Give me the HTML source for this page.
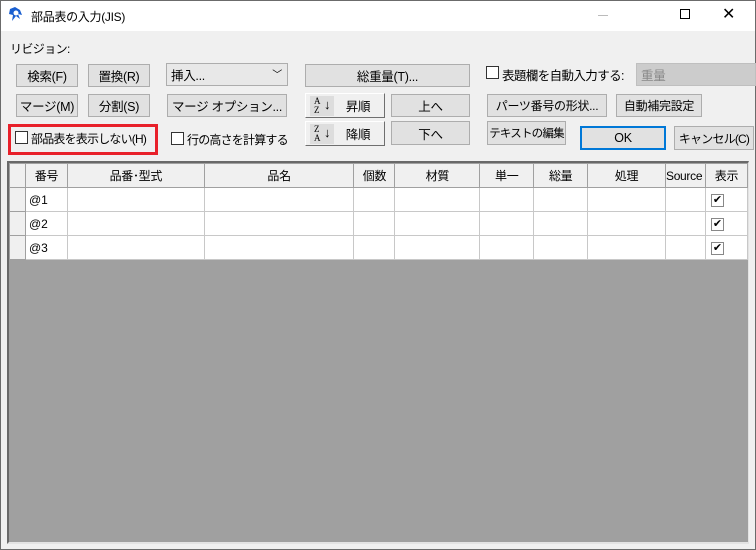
<!DOCTYPE html>
<html><head><meta charset="utf-8"><style>
*{box-sizing:border-box;margin:0;padding:0}
body{width:756px;height:550px;overflow:hidden;background:#f0f0f0;font-family:"Liberation Sans","Noto Sans CJK JP",sans-serif;font-size:12px;color:#000;position:relative}
.a{position:absolute}
.win{left:0;top:0;width:756px;height:550px;border:1px solid #6b6b6b}
.title{left:1px;top:1px;width:754px;height:30px;background:#fff}
.btn{position:absolute;background:#e1e1e1;border:1px solid #adadad;display:flex;align-items:center;justify-content:center;font-size:12.5px;letter-spacing:-0.3px;white-space:nowrap;overflow:hidden}
.cb{position:absolute;width:13px;height:13px;border:1px solid #333;background:#fff}
.lbl{position:absolute;font-size:12.5px;letter-spacing:-0.6px;white-space:nowrap}
.grid{left:7px;top:161px;width:742px;height:383px;background:#a0a0a0;border-left:2px solid #696969;border-top:2px solid #696969;border-right:1px solid #e3e3e3;border-bottom:2px solid #e3e3e3;overflow:hidden}
table{border-collapse:collapse;table-layout:fixed;position:absolute;left:0;top:0}
td{border:1px solid #c8c8c8;background:#fff;height:24px;font-size:12px;padding-left:3px;overflow:hidden;white-space:nowrap}
tr.h td{background:#f0f0f0;text-align:center;padding:0;border-color:#a0a0a0;height:24px;letter-spacing:-0.3px}
td.rh{background:#f0f0f0;border-color:#a0a0a0}
.ck{display:inline-block;width:13px;height:13px;border:1px solid #888;background:#fff;font-size:11px;line-height:11px;text-align:center;margin-left:2px}
</style></head><body>
<div class="a win"></div>
<div class="a title"></div>
<svg class="a" style="left:8px;top:6px" width="16" height="16" viewBox="0 0 16 16"><path d="M2 3 L7 1 L12 4 L14 9 L10 8 L12 13 L8 10 L4 15 L5 9 L1 8 Z" fill="#1a5fd0"/><circle cx="8" cy="7" r="2.5" fill="#fff"/></svg>
<div class="lbl" style="left:31px;top:8px;font-size:12px;letter-spacing:-0.3px">部品表の入力(JIS)</div>
<div class="a" style="left:598px;top:15px;width:10px;height:1px;background:#bbb"></div>
<div class="a" style="left:680px;top:9px;width:10px;height:10px;border:1px solid #000"></div>
<div class="lbl" style="left:722px;top:4px;font-size:16px">✕</div>
<div class="lbl" style="left:10px;top:40px;font-size:12px">リビジョン:</div>

<div class="btn" style="left:16px;top:64px;width:62px;height:23px">検索(F)</div>
<div class="btn" style="left:88px;top:64px;width:62px;height:23px">置換(R)</div>
<div class="btn" style="left:166px;top:63px;width:122px;height:23px;justify-content:flex-start;padding-left:4px;background:#e8e8e8">挿入...<span style="position:absolute;right:5px;top:2px;font-size:10px">﹀</span></div>
<div class="btn" style="left:305px;top:64px;width:165px;height:23px">総重量(T)...</div>
<div class="cb" style="left:486px;top:66px"></div>
<div class="lbl" style="left:502px;top:65px">表題欄を自動入力する:</div>
<div class="btn" style="left:636px;top:63px;width:120px;height:23px;justify-content:flex-start;padding-left:4px;background:#cccccc;border-color:#bfbfbf;color:#888">重量</div>

<div class="btn" style="left:16px;top:94px;width:62px;height:23px">マージ(M)</div>
<div class="btn" style="left:88px;top:94px;width:62px;height:23px">分割(S)</div>
<div class="btn" style="left:167px;top:94px;width:120px;height:23px">マージ オプション...</div>
<div class="btn" style="left:305px;top:93px;width:80px;height:25px;border-color:#fff #6f6f6f #6f6f6f #fff;background:#f0f0f0"><span style="position:absolute;left:4px;top:2px;width:24px;height:20px;background:#ddd;font-size:9px;line-height:9px;padding:1px 0 0 4px;font-family:'Liberation Serif',serif">A<br>Z</span><span style="position:absolute;left:18px;top:3px;font-size:13px">↓</span><span style="margin-left:26px">昇順</span></div>
<div class="btn" style="left:391px;top:94px;width:79px;height:23px">上へ</div>
<div class="btn" style="left:487px;top:94px;width:120px;height:23px;font-size:12px">パーツ番号の形状...</div>
<div class="btn" style="left:616px;top:94px;width:86px;height:23px;font-size:12px">自動補完設定</div>

<div class="btn" style="left:305px;top:121px;width:80px;height:25px;border-color:#fff #6f6f6f #6f6f6f #fff;background:#f0f0f0"><span style="position:absolute;left:4px;top:2px;width:24px;height:20px;background:#ddd;font-size:9px;line-height:9px;padding:1px 0 0 4px;font-family:'Liberation Serif',serif">Z<br>A</span><span style="position:absolute;left:18px;top:3px;font-size:13px">↓</span><span style="margin-left:26px">降順</span></div>
<div class="btn" style="left:391px;top:121px;width:79px;height:24px">下へ</div>
<div class="btn" style="left:487px;top:121px;width:79px;height:24px;font-size:11.5px;letter-spacing:-0.8px">テキストの編集</div>
<div class="btn" style="left:580px;top:126px;width:86px;height:24px;border:2px solid #0078d7">OK</div>
<div class="btn" style="left:674px;top:126px;width:80px;height:24px;font-size:12px;letter-spacing:-0.8px">キャンセル(C)</div>

<div class="a" style="left:8px;top:124px;width:150px;height:31px;border:3px solid #e8202a"></div>
<div class="cb" style="left:15px;top:131px"></div>
<div class="lbl" style="left:31px;top:130px;font-size:12px;letter-spacing:-0.8px">部品表を表示しない(H)</div>
<div class="cb" style="left:171px;top:132px"></div>
<div class="lbl" style="left:187px;top:131px;font-size:12px;letter-spacing:-0.8px">行の高さを計算する</div>

<div class="a grid">
<table>
<colgroup><col style="width:16px"><col style="width:42px"><col style="width:137px"><col style="width:150px"><col style="width:41px"><col style="width:85px"><col style="width:54px"><col style="width:54px"><col style="width:78px"><col style="width:40px"><col style="width:42px"></colgroup>
<tr class="h"><td></td><td>番号</td><td>品番･型式</td><td>品名</td><td>個数</td><td>材質</td><td>単一</td><td>総量</td><td>処理</td><td style="text-align:left">Source</td><td>表示</td></tr>
<tr><td class="rh"></td><td>@1</td><td></td><td></td><td></td><td></td><td></td><td></td><td></td><td></td><td><span class="ck">✔</span></td></tr>
<tr><td class="rh"></td><td>@2</td><td></td><td></td><td></td><td></td><td></td><td></td><td></td><td></td><td><span class="ck">✔</span></td></tr>
<tr><td class="rh"></td><td>@3</td><td></td><td></td><td></td><td></td><td></td><td></td><td></td><td></td><td><span class="ck">✔</span></td></tr>
</table>
</div>
</body></html>
